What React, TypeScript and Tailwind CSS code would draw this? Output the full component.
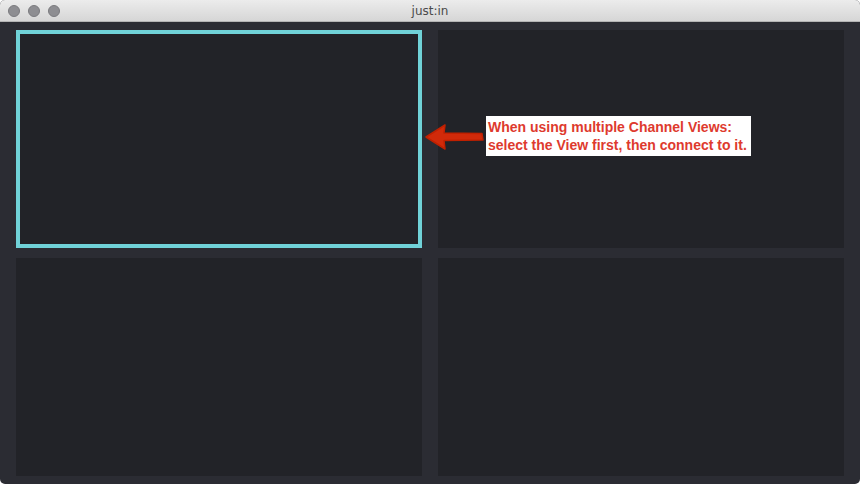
export default function App() {
  const font = { fontFamily: '"Liberation Sans", Arial, sans-serif' };

  return (
    <div className="w-[860px] h-[484px] bg-white" style={font}>
      <div className="relative flex h-full w-full flex-col overflow-hidden rounded-[5px] bg-[#2b2c33]">
        {/* title bar */}
        <div className="relative flex h-[22px] shrink-0 items-center justify-center border-b border-[#b4b4b4] bg-gradient-to-b from-[#ececec] to-[#d6d6d6]">
          <div className="absolute left-[8px] top-[5px] flex gap-[8px]">
            <span className="h-[12px] w-[12px] rounded-full border border-[#7a7a7e] bg-[#8e8e92]" />
            <span className="h-[12px] w-[12px] rounded-full border border-[#7a7a7e] bg-[#8e8e92]" />
            <span className="h-[12px] w-[12px] rounded-full border border-[#7a7a7e] bg-[#8e8e92]" />
          </div>
          <span className="text-[12px] text-[#4a4a4a] [font-family:'DejaVu_Sans',sans-serif]">
            just:in
          </span>
        </div>

        {/* channel views */}
        <div className="grid flex-1 grid-cols-2 grid-rows-2 gap-x-4 gap-y-[10px] px-4 pb-[8px] pt-[8px]">
          <div className="border-4 border-[#70d2d8] bg-[#222328]" />
          <div className="bg-[#222328]" />
          <div className="bg-[#222328]" />
          <div className="bg-[#222328]" />
        </div>

        {/* annotation */}
        <svg
          className="absolute left-[424px] top-[123px]"
          width="62"
          height="28"
          viewBox="0 0 62 28"
        >
          <path
            d="M2 14 L21 2 L20 10 L58 10.5 L59 17 L20 17.5 L21 26 Z"
            fill="#d12a0a"
            stroke="#c02000"
            strokeWidth="1.5"
            strokeLinejoin="round"
          />
        </svg>
        <div className="absolute left-[486px] top-[116px] w-[265px] bg-white px-[2px] py-[2px] text-[14px] font-bold leading-[18px] text-[#de3a2e]">
          <div>When using multiple Channel Views:</div>
          <div>select the View first, then connect to it.</div>
        </div>
      </div>
    </div>
  );
}
